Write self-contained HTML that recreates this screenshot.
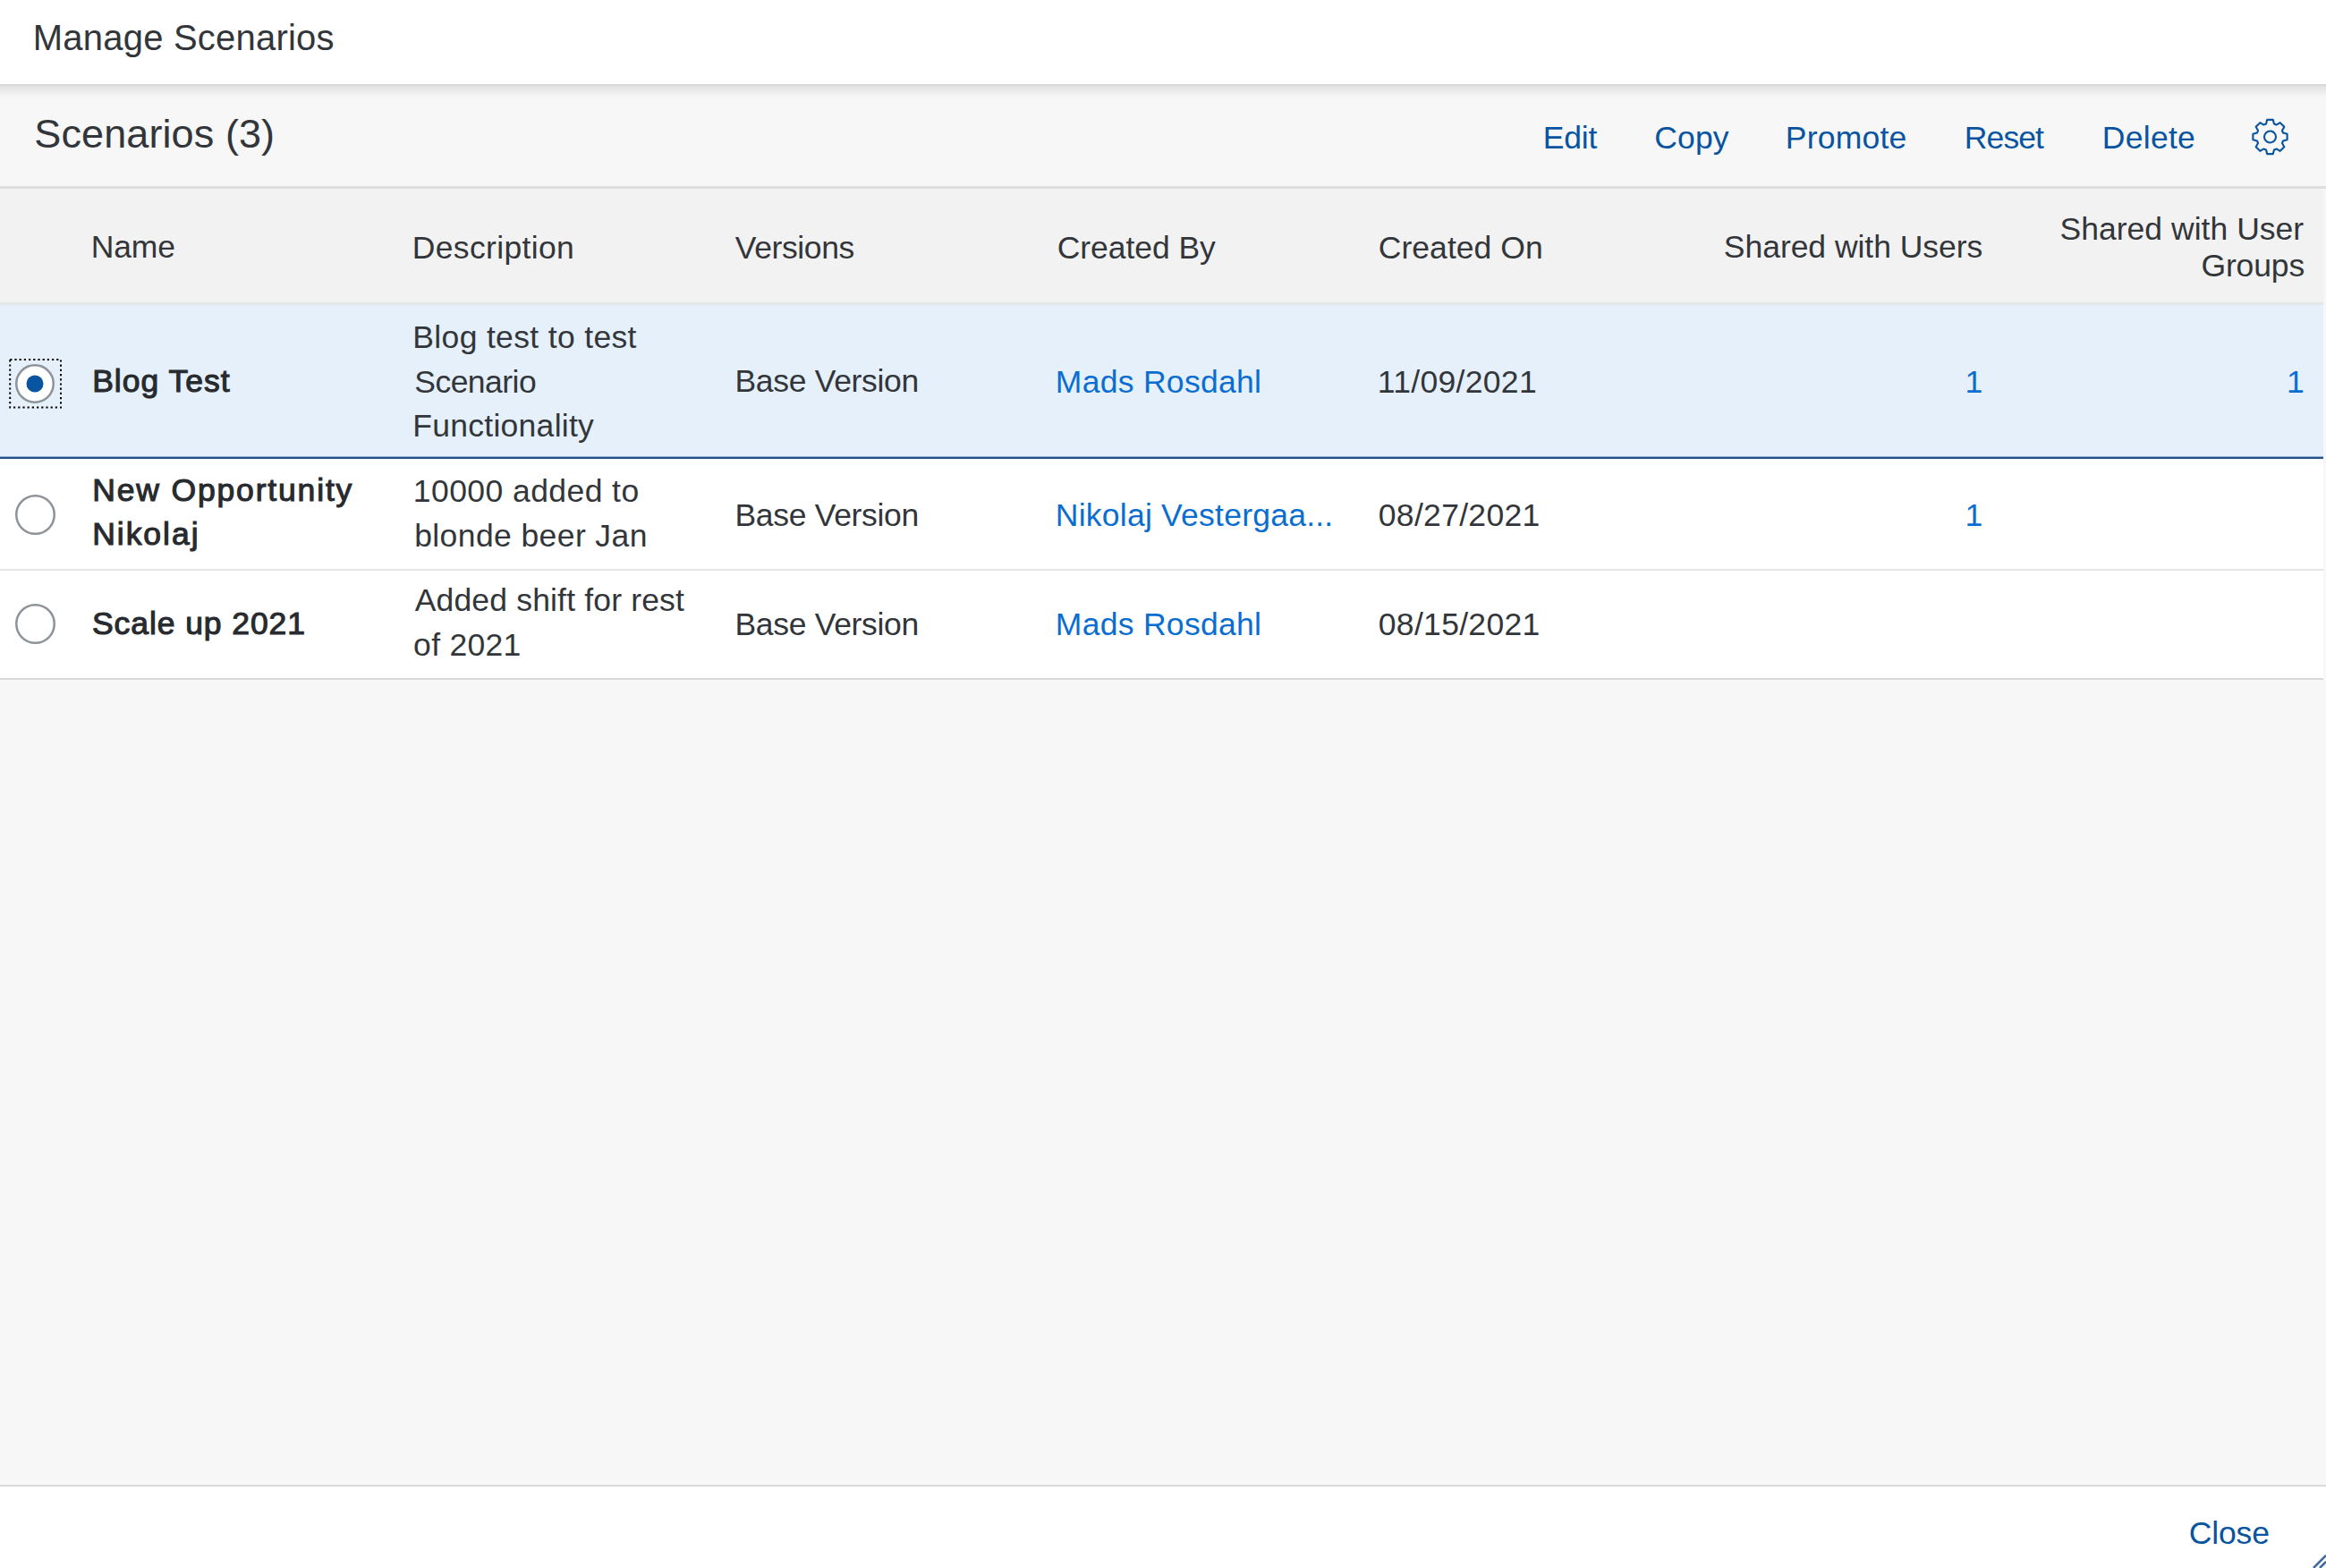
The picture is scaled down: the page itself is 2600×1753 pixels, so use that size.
<!DOCTYPE html>
<html><head><meta charset="utf-8"><title>Manage Scenarios</title>
<style>
html,body{margin:0;padding:0;}
body{width:2600px;height:1753px;position:relative;overflow:hidden;background:#f7f7f7;font-family:"Liberation Sans",sans-serif;}
#w{position:absolute;left:0;top:0;width:2600px;height:1753px;background:#f7f7f7;}
.b{position:absolute;}
.t{position:absolute;white-space:nowrap;line-height:49.3px;}
</style></head><body>
<div id="w">
<div class="b" style="left:0px;top:0px;width:2600px;height:94px;background:#ffffff;"></div>
<div class="b" style="left:0px;top:94px;width:2600px;height:2px;background:#d9d9d9;"></div>
<div class="b" style="left:0px;top:96px;width:2600px;height:13px;background:linear-gradient(#e2e2e2,#f7f7f7);"></div>
<div class="b" style="left:0px;top:208px;width:2600px;height:3px;background:#dedede;"></div>
<div class="b" style="left:0px;top:211px;width:2597px;height:128px;background:#f2f2f2;"></div>
<div class="b" style="left:0px;top:338px;width:2597px;height:3px;background:#e4e6e8;"></div>
<div class="b" style="left:0px;top:341px;width:2597px;height:169px;background:#e5f0fa;"></div>
<div class="b" style="left:0px;top:510px;width:2597px;height:1px;background:#8fb0d3;"></div>
<div class="b" style="left:0px;top:511px;width:2597px;height:2px;background:#23528a;"></div>
<div class="b" style="left:0px;top:513px;width:2597px;height:123px;background:#ffffff;"></div>
<div class="b" style="left:0px;top:636px;width:2597px;height:2px;background:#e5e5e5;"></div>
<div class="b" style="left:0px;top:638px;width:2597px;height:120px;background:#ffffff;"></div>
<div class="b" style="left:0px;top:758px;width:2597px;height:2px;background:#d9d9d9;"></div>
<div class="b" style="left:0px;top:1660px;width:2600px;height:2px;background:#d9d9d9;"></div>
<div class="b" style="left:0px;top:1662px;width:2600px;height:91px;background:#ffffff;"></div>
<svg class="b" style="left:15.0px;top:404.5px" width="48" height="48"><circle cx="24.0" cy="24.0" r="20.75" fill="#fff" stroke="#8d9399" stroke-width="2.5"/><circle cx="24.0" cy="24.0" r="9.5" fill="#0854a0"/></svg>
<svg class="b" style="left:9px;top:400px" width="61" height="58"><rect x="2.2" y="2" width="56.8" height="53.6" fill="none" stroke="#000" stroke-width="2" stroke-dasharray="2.2 3"/></svg>
<svg class="b" style="left:14.700000000000003px;top:550.5px" width="49" height="49"><circle cx="24.5" cy="24.5" r="21.25" fill="#fff" stroke="#8d9399" stroke-width="2.5"/></svg>
<svg class="b" style="left:14.5px;top:673.0px" width="49" height="49"><circle cx="24.5" cy="24.5" r="21.25" fill="#fff" stroke="#8d9399" stroke-width="2.5"/></svg>
<svg class="b" style="left:0;top:0" width="2600" height="240"><path d="M2533.01,138.48 L2534.22,133.88 L2540.78,133.88 L2541.99,138.48 L2544.59,139.56 L2548.70,137.16 L2553.34,141.80 L2550.94,145.91 L2552.02,148.51 L2556.62,149.72 L2556.62,156.28 L2552.02,157.49 L2550.94,160.09 L2553.34,164.20 L2548.70,168.84 L2544.59,166.44 L2541.99,167.52 L2540.78,172.12 L2534.22,172.12 L2533.01,167.52 L2530.41,166.44 L2526.30,168.84 L2521.66,164.20 L2524.06,160.09 L2522.98,157.49 L2518.38,156.28 L2518.38,149.72 L2522.98,148.51 L2524.06,145.91 L2521.66,141.80 L2526.30,137.16 L2530.41,139.56Z" fill="none" stroke="#0854a0" stroke-width="2.1" stroke-linejoin="round"/><circle cx="2537.5" cy="153" r="6.5" fill="none" stroke="#0854a0" stroke-width="2.1"/></svg>
<svg class="b" style="left:2580px;top:1733px" width="20" height="20"><path d="M6,20 L20,6 M13,20 L20,13" stroke="#3f6aa0" stroke-width="2.6"/></svg>
<div class="t" style="left:36.8px;top:18.4px;font-size:40px;color:#32363a;letter-spacing:0.21px;">Manage Scenarios</div>
<div class="t" style="left:38.3px;top:124.9px;font-size:45px;color:#32363a;letter-spacing:0.10px;">Scenarios (3)</div>
<div class="t" style="left:1724.8px;top:130.2px;font-size:35.5px;color:#0854a0;letter-spacing:-0.20px;">Edit</div>
<div class="t" style="left:1849.3px;top:130.2px;font-size:35.5px;color:#0854a0;letter-spacing:0.13px;">Copy</div>
<div class="t" style="left:1995.8px;top:130.2px;font-size:35.5px;color:#0854a0;letter-spacing:0.23px;">Promote</div>
<div class="t" style="left:2195.8px;top:129.6px;font-size:35.5px;color:#0854a0;letter-spacing:-0.90px;">Reset</div>
<div class="t" style="left:2349.8px;top:129.6px;font-size:35.5px;color:#0854a0;letter-spacing:0.28px;">Delete</div>
<div class="t" style="left:101.8px;top:252.1px;font-size:35.5px;color:#32363a;letter-spacing:-0.20px;">Name</div>
<div class="t" style="left:460.8px;top:252.9px;font-size:35.5px;color:#32363a;letter-spacing:0.34px;">Description</div>
<div class="t" style="left:821.8px;top:252.9px;font-size:35.5px;color:#32363a;letter-spacing:-0.37px;">Versions</div>
<div class="t" style="left:1181.8px;top:252.9px;font-size:35.5px;color:#32363a;letter-spacing:-0.07px;">Created By</div>
<div class="t" style="left:1540.8px;top:252.9px;font-size:35.5px;color:#32363a;letter-spacing:0.04px;">Created On</div>
<div class="t" style="right:383.8px;top:252.4px;font-size:35.5px;color:#32363a;letter-spacing:-0.04px;">Shared with Users</div>
<div class="t" style="right:24.8px;top:231.9px;font-size:35.5px;color:#32363a;letter-spacing:0.03px;">Shared with User</div>
<div class="t" style="right:23.9px;top:272.9px;font-size:35.5px;color:#32363a;letter-spacing:-0.12px;">Groups</div>
<div class="t" style="left:103.2px;top:401.9px;font-size:35.5px;color:#272a2e;-webkit-text-stroke:1.1px #272a2e;letter-spacing:1.00px;">Blog Test</div>
<div class="t" style="left:461.3px;top:353.4px;font-size:35.5px;color:#32363a;letter-spacing:0.34px;">Blog test to test</div>
<div class="t" style="left:463.3px;top:403.4px;font-size:35.5px;color:#32363a;letter-spacing:-0.54px;">Scenario</div>
<div class="t" style="left:461.3px;top:451.9px;font-size:35.5px;color:#32363a;letter-spacing:0.27px;">Functionality</div>
<div class="t" style="left:821.5px;top:402.3px;font-size:35.5px;color:#32363a;letter-spacing:-0.31px;">Base Version</div>
<div class="t" style="left:1179.8px;top:403.3px;font-size:35.5px;color:#0a6ed1;letter-spacing:0.29px;">Mads Rosdahl</div>
<div class="t" style="left:1539.8px;top:403.3px;font-size:35.5px;color:#32363a;letter-spacing:0.31px;">11/09/2021</div>
<div class="t" style="right:383.8px;top:402.9px;font-size:35.5px;color:#0a6ed1;">1</div>
<div class="t" style="right:24.3px;top:402.9px;font-size:35.5px;color:#0a6ed1;">1</div>
<div class="t" style="left:103.2px;top:523.6px;font-size:35.5px;color:#272a2e;-webkit-text-stroke:1.1px #272a2e;letter-spacing:1.84px;">New Opportunity</div>
<div class="t" style="left:103.2px;top:572.8px;font-size:35.5px;color:#272a2e;-webkit-text-stroke:1.1px #272a2e;letter-spacing:1.97px;">Nikolaj</div>
<div class="t" style="left:461.8px;top:525.1px;font-size:35.5px;color:#32363a;letter-spacing:0.43px;">10000 added to</div>
<div class="t" style="left:463.2px;top:574.9px;font-size:35.5px;color:#32363a;letter-spacing:0.40px;">blonde beer Jan</div>
<div class="t" style="left:821.5px;top:551.9px;font-size:35.5px;color:#32363a;letter-spacing:-0.31px;">Base Version</div>
<div class="t" style="left:1179.8px;top:551.9px;font-size:35.5px;color:#0a6ed1;letter-spacing:0.24px;">Nikolaj Vestergaa...</div>
<div class="t" style="left:1540.8px;top:551.9px;font-size:35.5px;color:#32363a;letter-spacing:0.31px;">08/27/2021</div>
<div class="t" style="right:383.8px;top:551.9px;font-size:35.5px;color:#0a6ed1;">1</div>
<div class="t" style="left:103.0px;top:672.9px;font-size:35.5px;color:#272a2e;-webkit-text-stroke:1.1px #272a2e;letter-spacing:0.92px;">Scale up 2021</div>
<div class="t" style="left:463.7px;top:647.4px;font-size:35.5px;color:#32363a;letter-spacing:0.17px;">Added shift for rest</div>
<div class="t" style="left:462.1px;top:696.9px;font-size:35.5px;color:#32363a;letter-spacing:0.30px;">of 2021</div>
<div class="t" style="left:821.5px;top:674.4px;font-size:35.5px;color:#32363a;letter-spacing:-0.31px;">Base Version</div>
<div class="t" style="left:1179.8px;top:674.4px;font-size:35.5px;color:#0a6ed1;letter-spacing:0.29px;">Mads Rosdahl</div>
<div class="t" style="left:1540.8px;top:674.4px;font-size:35.5px;color:#32363a;letter-spacing:0.31px;">08/15/2021</div>
<div class="t" style="left:2446.8px;top:1690.4px;font-size:35.5px;color:#0854a0;letter-spacing:-0.15px;">Close</div>
</div>
</body></html>
